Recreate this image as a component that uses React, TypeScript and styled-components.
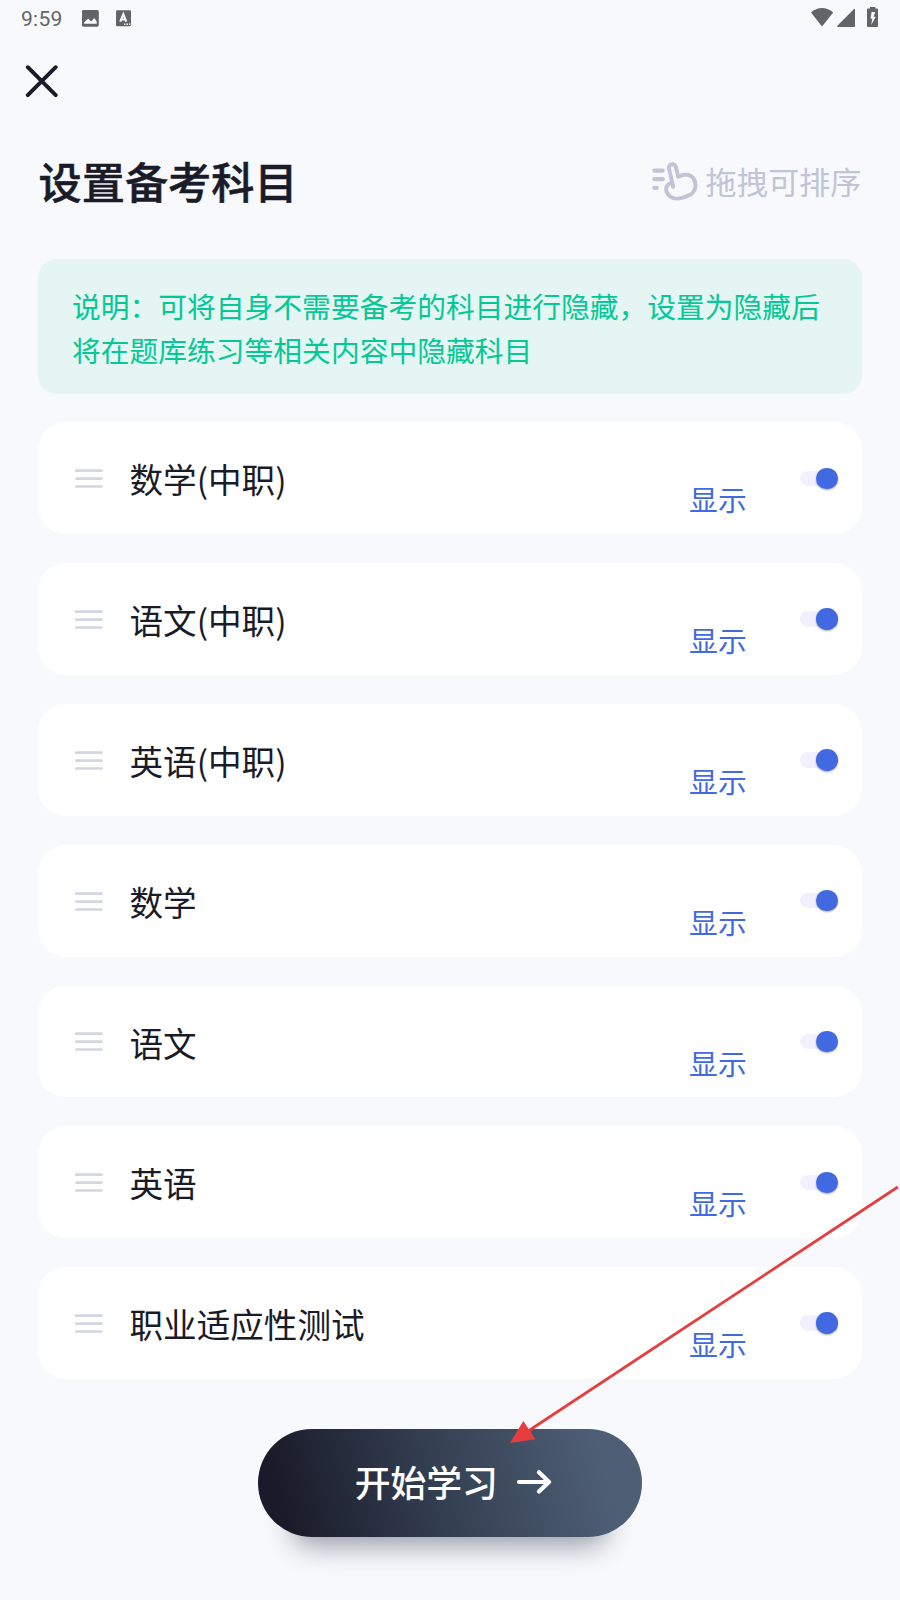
import React from "react";
import styled, { createGlobalStyle } from "styled-components";

const GlobalStyle = createGlobalStyle`
  *, *::before, *::after { box-sizing: border-box; }
  body { margin: 0; background: #f7f9fc; }
  svg { display: block; flex: none; }
`;

const Screen = styled.main`
  position: relative;
  width: 900px;
  height: 1600px;
  overflow: hidden;
  display: flex;
  flex-direction: column;
  background: #f7f9fc;
  color: #1a1b28;
  font-family: "Noto Sans CJK SC", sans-serif;
`;

const StatusBar = styled.div`
  height: 36px;
  flex: none;
  display: flex;
  justify-content: space-between;
  padding: 0 21px;
  color: #636466;
`;

const StatusGroup = styled.div`
  display: flex;
  align-items: center;
`;

const Clock = styled.span`
  width: 60.5px;
  margin-right: -16px;
  font: 400 21px/36px Roboto, sans-serif;
  letter-spacing: 0.3px;
  padding-top: 1px;
`;

const NotificationGroup = styled(StatusGroup)`
  gap: 16px;
`;

const NavBar = styled.div`
  height: 92px;
  flex: none;
  padding: 29px 0 0 24px;
`;

const CloseButton = styled.button`
  display: block;
  padding: 0;
  border: 0;
  background: none;
  color: inherit;
`;

const Header = styled.header`
  height: 131px;
  flex: none;
  display: flex;
  justify-content: space-between;
  padding: 21px 38.5px 0 38.5px;
`;

const Title = styled.h1`
  margin: 0;
  padding-top: 1px;
  font-size: 43.2px;
  line-height: 60px;
  font-weight: 500;
  -webkit-text-stroke: 0.5px currentColor;
`;

const SortHint = styled.div`
  height: 64px;
  display: flex;
  align-items: center;
  gap: 6.5px;
  color: #c0c4d6;
  font-size: 31.2px;
  line-height: 40px;
`;

const Notice = styled.p`
  flex: none;
  height: 135px;
  margin: 0 38.2px 28.4px;
  padding: 24.5px 33.8px 22px;
  border-radius: 19px;
  background: #e4f5f3;
  color: #06c895;
  font-size: 28.77px;
  line-height: 44px;
  white-space: pre-line;
`;

const SubjectList = styled.ul`
  flex: none;
  margin: 0;
  padding: 0 38.2px;
  list-style: none;
  display: flex;
  flex-direction: column;
  gap: 29.13px;
`;

const SubjectCard = styled.li`
  height: 111.7px;
  display: flex;
  align-items: center;
  padding: 0 24.1px 0 36.8px;
  border-radius: 28px;
  background: #fff;
`;

const SubjectName = styled.span`
  flex: 1;
  padding: 2.3px 0 0 26.5px;
  font-size: 33.6px;
  line-height: 48px;
`;

const Visibility = styled.span`
  align-self: flex-end;
  margin: 0 53px 16.7px 0;
  font-size: 28.8px;
  line-height: 36px;
  color: #4169e1;
`;

const Switch = styled.button`
  width: 38px;
  height: 15.3px;
  padding: 0;
  border: 0;
  border-radius: 8px;
  background: #f2effe;
  display: flex;
  align-items: center;
  justify-content: flex-end;
`;

const Knob = styled.span`
  width: 21.4px;
  height: 21.4px;
  flex: none;
  border-radius: 50%;
  background: #4169e1;
  box-shadow: 0 1px 2px rgba(0, 0, 0, 0.35);
`;

const StartButton = styled.button`
  flex: none;
  width: 384px;
  height: 108px;
  margin: 50px auto 0;
  padding: 0 0 3px 7px;
  border: 0;
  border-radius: 54px;
  background: linear-gradient(75deg, #1a1b2a 8%, #364254 50%, #4e5e75 88%);
  box-shadow: 0 42px 28px -34px rgba(30, 36, 60, 0.46);
  color: #fff;
  display: flex;
  align-items: center;
  justify-content: center;
  gap: 18.5px;
  font: 500 35.8px/50px "Noto Sans CJK SC", sans-serif;
`;

const Pointer = styled.svg`
  position: absolute;
  left: 500px;
  top: 1170px;
  pointer-events: none;
`;

const subjects = [
  "数学(中职)",
  "语文(中职)",
  "英语(中职)",
  "数学",
  "语文",
  "英语",
  "职业适应性测试",
];

const PictureIcon = () => (
  <svg width="18" height="18" viewBox="0.5 -0.5 18 18">
    <path
      fill="currentColor"
      fillRule="evenodd"
      d="M2 0.4h13.6a1.7 1.7 0 0 1 1.7 1.7v13.5a1.7 1.7 0 0 1-1.7 1.7H2a1.7 1.7 0 0 1-1.7-1.7V2.1A1.7 1.7 0 0 1 2 .4zM2.500 14.200h12.700V12l-2.500-3.500-3 3.500-3-3L2.500 13z"
    />
  </svg>
);

const KeyboardIcon = () => (
  <svg width="16" height="17" viewBox="0 0 16 17">
    <rect x="0" y="0.300" width="15" height="16" rx="1.400" fill="currentColor" />
    <path d="M4.300 11.600 7.300 4.200 10.300 11.600M5.300 9.500h4" fill="none" stroke="#f7f9fc" strokeWidth="2.100" />
    <path d="M8 14.200h1.500M10.500 14.200H12M13 14.200h1.300" stroke="#f7f9fc" strokeWidth="1.400" />
  </svg>
);

const SystemIcons = () => (
  <svg width="69" height="36" viewBox="810 0 69 36" fill="currentColor">
    <path d="M822 26.500 811 12.400C814 9.600 818 8 822 8s8 1.600 11.200 4.400z" />
    <path d="M854 9.100q1-.8 1 .6V26q0 1-1 1H838q-1.600 0-.6-1.200z" />
    <path
      fillRule="evenodd"
      d="M870 7h5.300v1.600H877q1 0 1 1V26q0 1-1 1h-9q-1 0-1-1V9.600q0-1 1-1h2zM871.600 12l-1.100 6.800h1.800L871.200 25l4.600-8.300h-2.200L875.200 12z"
    />
  </svg>
);

const CloseIcon = () => (
  <svg width="36" height="36" viewBox="0 0 36 36">
    <path d="M3.800 2.200 31.700 30.100M31.700 2.200 3.800 30.100" stroke="currentColor" strokeWidth="3.900" strokeLinecap="round" />
  </svg>
);

const DragHandIcon = () => (
  <svg width="48" height="42" viewBox="651.500 159.700 48 42" fill="none" stroke="currentColor" strokeLinecap="round" strokeLinejoin="round">
    <path strokeWidth="4.200" d="M654.800 170.300h8.500M654.800 178.900h8.500M654.800 187.500h2.400" />
    <path
      strokeWidth="3.900"
      d="M673.700 186.500 669.500 168.500C668.500 163 675.500 162.500 676.500 167L678.700 176.500C684 173.800 690 173.500 693.500 177.500C697.500 182.500 697 190.500 690.500 194.500C684.500 198 675.500 200 671 196.500C667 193.500 665.500 188.500 667.500 185.500C668.700 183.700 670.500 183 672.500 182.800"
    />
  </svg>
);

const DragHandleIcon = () => (
  <svg width="28" height="22" viewBox="0 0 28 22">
    <path d="M1.300 3.700h25.200M1.300 11.600h25.200M1.300 19.500h25.200" stroke="#d4d6e2" strokeWidth="2.700" strokeLinecap="round" />
  </svg>
);

const ArrowIcon = () => (
  <svg width="36" height="26" viewBox="0 0 36 26" fill="none" stroke="currentColor" strokeWidth="4.200" strokeLinecap="round" strokeLinejoin="round">
    <path d="M3 14h29M23 4.200 33 14 23 23.600" />
  </svg>
);

export default function App() {
  return (
    <Screen>
      <GlobalStyle />
      <StatusBar>
        <NotificationGroup>
          <Clock>9:59</Clock>
          <PictureIcon />
          <KeyboardIcon />
        </NotificationGroup>
        <StatusGroup>
          <SystemIcons />
        </StatusGroup>
      </StatusBar>
      <NavBar>
        <CloseButton aria-label="关闭">
          <CloseIcon />
        </CloseButton>
      </NavBar>
      <Header>
        <Title>设置备考科目</Title>
        <SortHint>
          <DragHandIcon />
          <span>拖拽可排序</span>
        </SortHint>
      </Header>
      <Notice>
        {"说明：可将自身不需要备考的科目进行隐藏，设置为隐藏后\n将在题库练习等相关内容中隐藏科目"}
      </Notice>
      <SubjectList>
        {subjects.map((name) => (
          <SubjectCard key={name}>
            <DragHandleIcon />
            <SubjectName>{name}</SubjectName>
            <Visibility>显示</Visibility>
            <Switch role="switch" aria-checked="true" aria-label={name}>
              <Knob />
            </Switch>
          </SubjectCard>
        ))}
      </SubjectList>
      <StartButton>
        <span>开始学习</span>
        <ArrowIcon />
      </StartButton>
      <Pointer width="400" height="280" viewBox="500 1170 400 280">
        <path d="M897.800 1187 526 1432.500" stroke="#e53e3e" strokeWidth="2.800" />
        <path d="M510 1443 523.300 1421 535.500 1439.200z" fill="#e53e3e" />
      </Pointer>
    </Screen>
  );
}
